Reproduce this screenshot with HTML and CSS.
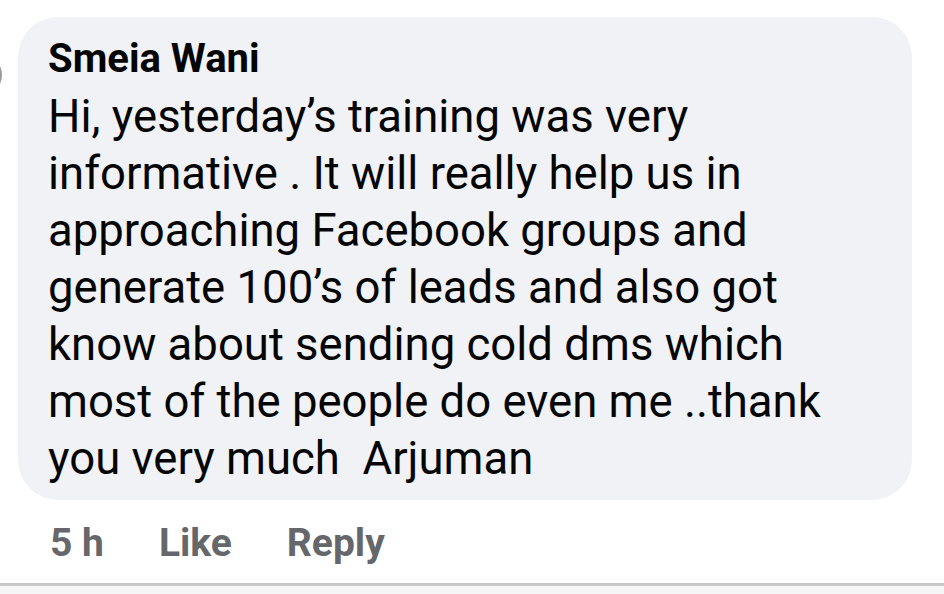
FILE: index.html
```html
<!DOCTYPE html>
<html lang="en">
<head>
  <meta charset="UTF-8" />
  <meta name="viewport" content="width=device-width, initial-scale=1.0"/>
  <title>Comment</title>
  <link rel="stylesheet" href="styles.css">
</head>
<body>
  <div class="comment">
    <div class="avatar"></div>
    <div class="isi">
      <div class="bubble">
        <div class="nama">Smeia Wani</div>
        <p class="teks">Hi, yesterday’s training was very informative . It will really help us in approaching Facebook groups and generate 100’s of leads and also got know about sending cold dms which most of the people do even me ..thank you very much&nbsp; Arjuman</p>
      </div>
      <div class="aksi">
        <span>5 h</span>
        <span>Like</span>
        <span>Reply</span>
      </div>
    </div>
  </div>
  <div class="garis"></div>
</body>
</html>
```

FILE: styles.css
```css
:root {
  --bubble-bg: #f0f2f5;
  --text: #050505;
  --muted: #65676b;
}

body {
  margin: 0;
  background: #fff;
  font-family: Roboto, 'Noto Sans', sans-serif;
  color: var(--text);
  overflow: hidden;
}

.comment {
  display: flex;
  padding-top: 17px;
  height: 583px;
  box-sizing: border-box;
}

.avatar {
  width: 40px;
  height: 40px;
  margin-left: -38px;
  margin-top: 38px;
  border-radius: 50%;
  background: #9a9a9a;
  flex-shrink: 0;
}

.isi {
  margin-left: 16px;
  width: 894px;
}

.bubble {
  background: var(--bubble-bg);
  border-radius: 40px;
  padding: 22px 40px 0 30px;
  height: 483px;
  box-sizing: border-box;
}

.nama {
  font-size: 40px;
  font-weight: bold;
  line-height: 40px;
}

.teks {
  margin: 9px 0 0;
  font-size: 45.5px;
  line-height: 57px;
}

.aksi {
  display: flex;
  gap: 55px;
  padding: 20px 0 0 32px;
  font-size: 39px;
  font-weight: bold;
  color: var(--muted);
}

.garis {
  border-top: 3px solid #c9c9c9;
  height: 8px;
  background: #f6f6f6;
}
```
